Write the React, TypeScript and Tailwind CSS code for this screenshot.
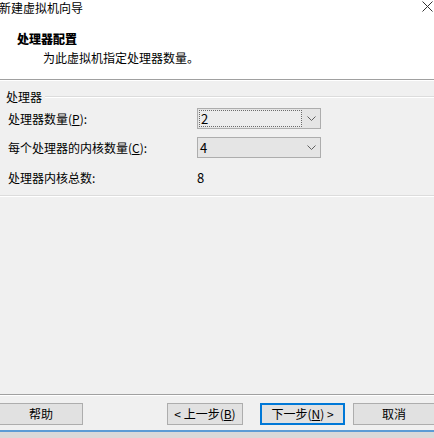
import React from 'react';

const font = { fontFamily: '"Noto Sans CJK SC", "Microsoft YaHei", sans-serif' };

function Combo({ value, focused }: { value: string; focused?: boolean }) {
  return (
    <div className="w-[124px] h-[21px] border border-[#adadad] bg-[#e5e5e5] flex items-center">
      <div
        className={`ml-[1px] h-[17px] w-[103px] flex items-center pl-[1px] text-[13px] leading-none ${
          focused ? 'border border-dotted border-[#6b6b6b] bg-[#ececec]' : ''
        }`}
      >
        {value}
      </div>
      <div className="flex-1 flex items-center justify-center">
        <svg width="9" height="5" viewBox="0 0 9 5">
          <path d="M0.5 0.5 L4.5 4.5 L8.5 0.5" fill="none" stroke="#606060" strokeWidth="1" />
        </svg>
      </div>
    </div>
  );
}

function Btn({ children, primary, className }: { children: React.ReactNode; primary?: boolean; className?: string }) {
  return (
    <div
      className={`h-[22px] flex items-center justify-center text-[12px] text-black bg-[#e1e1e1] border ${
        primary ? 'border-[#0078d7] border-2' : 'border-[#adadad]'
      } ${className ?? ''}`}
    >
      {children}
    </div>
  );
}

export default function App() {
  return (
    <div className="w-[434px] h-[438px] bg-[#f0f0f0] flex flex-col text-black overflow-hidden" style={font}>
      {/* header */}
      <div className="h-[80px] bg-white border-b border-[#a0a0a0] relative">
        <div className="text-[12px] leading-[15px] -ml-[1px]">新建虚拟机向导</div>
        <div className="absolute right-[1px] top-[1px]">
          <svg width="11" height="11" viewBox="0 0 11 11">
            <path d="M0.5 0.5 L10.5 10.5 M10.5 0.5 L0.5 10.5" stroke="#333" strokeWidth="1" />
          </svg>
        </div>
        <div className="pl-[17px] mt-[16px] text-[12px] font-black leading-[16px]">处理器配置</div>
        <div className="pl-[43px] mt-[3px] text-[12px] leading-[16px]">为此虚拟机指定处理器数量。</div>
      </div>
      <div className="h-px bg-white" />

      {/* group */}
      <div className="mt-[8px] flex items-center">
        <span className="pl-[6px] text-[12px] leading-[16px] pr-[3px]">处理器</span>
        <div className="flex-1 h-px bg-[#dcdcdc] border-b border-white box-content" />
      </div>
      <div className="pl-[8px] mt-[3px] flex flex-col">
        <div className="flex items-center h-[21px]">
          <span className="w-[189px] text-[12px]">
            处理器数量(<span className="underline">P</span>):
          </span>
          <Combo value="2" focused />
        </div>
        <div className="flex items-center h-[21px] mt-[8px]">
          <span className="w-[189px] text-[12px]">
            每个处理器的内核数量(<span className="underline">C</span>):
          </span>
          <Combo value="4" />
        </div>
        <div className="flex items-center h-[20px] mt-[10px]">
          <span className="w-[189px] text-[12px]">处理器内核总数:</span>
          <span className="text-[13px]">8</span>
        </div>
      </div>
      <div className="mt-[7px] h-px bg-[#dcdcdc]" />
      <div className="h-px bg-white" />

      <div className="flex-1" />

      {/* footer */}
      <div className="h-px bg-[#a0a0a0]" />
      <div className="h-px bg-white" />
      <div className="mt-[7px] flex items-center">
        <Btn className="w-[84px] -ml-[1px]">帮助</Btn>
        <div className="flex-1" />
        <Btn className="w-[76px]">
          &lt;&nbsp;上一步(<span className="underline">B</span>)
        </Btn>
        <Btn primary className="w-[85px] ml-[17px]">
          下一步(<span className="underline">N</span>)&nbsp;&gt;
        </Btn>
        <Btn className="w-[82px] ml-[8px] -mr-[1px]">取消</Btn>
      </div>
      <div className="mt-[5px] h-[2px] bg-[#5b9bd5]" />
      <div className="h-[6px] bg-[#d9d9d9]" />
    </div>
  );
}
